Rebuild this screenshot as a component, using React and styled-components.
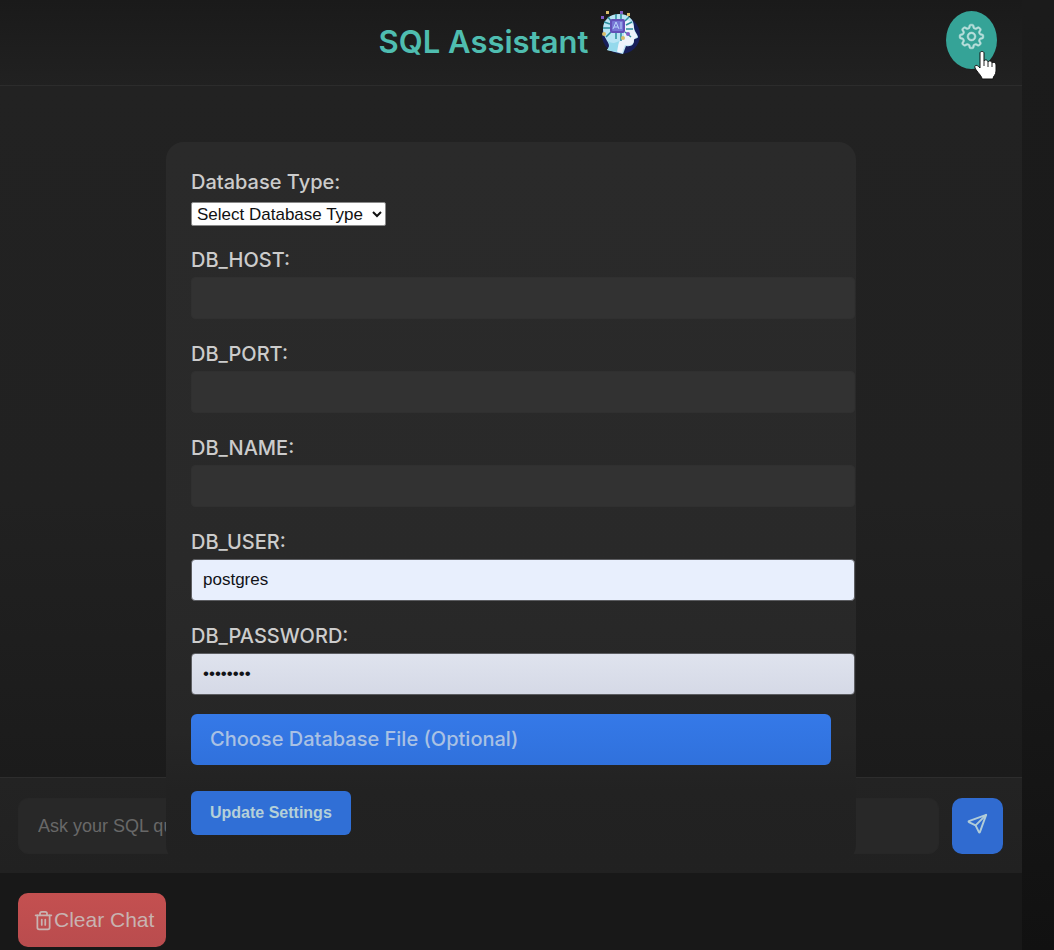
import React from "react";
import styled, { createGlobalStyle } from "styled-components";
import { GoGear } from "react-icons/go";
import { TbSend } from "react-icons/tb";
import { LuTrash2 } from "react-icons/lu";

const GlobalStyle = createGlobalStyle`
  * { box-sizing: border-box; }
  body {
    margin: 0;
    background: linear-gradient(#1b1b1b, #1a1a1a 60%, #111111) #111111;
    font-family: Inter, "Liberation Sans", sans-serif;
    color: #cccccc;
  }
  button, input, select { font-family: "Liberation Sans", Arial, sans-serif; }
`;

const Shell = styled.div`
  position: relative;
  display: flex;
  flex-direction: column;
  min-height: 100vh;
  margin-right: 32px;
  background: #181818;
`;

const Header = styled.header`
  position: relative;
  display: flex;
  align-items: center;
  justify-content: center;
  height: 86px;
  border-bottom: 1px solid #2c2c2c;
  background: linear-gradient(#1a1a1a, #212121);
`;

const Title = styled.h1`
  display: flex;
  align-items: flex-start;
  gap: 13px;
  margin: 0;
  padding-bottom: 10px;
  color: #4fbdb0;
  font-size: 31px;
  font-weight: 600;
  line-height: 48px;

  span { padding-top: 8px; }
  svg { width: 42px; height: 48px; }
`;

const SettingsButton = styled.button`
  position: absolute;
  top: 11px;
  right: 25px;
  display: flex;
  justify-content: center;
  width: 51px;
  height: 58px;
  padding: 12px 0 0;
  border: 0;
  border-radius: 50%;
  background: #35a397;
  color: #b9dfdc;
  font-size: 27px;
  cursor: pointer;

  svg { stroke: currentColor; stroke-width: 0.4; overflow: visible; }
`;

const Pointer = styled.svg`
  position: absolute;
  top: 50px;
  right: 25px;
  z-index: 3;
  width: 24px;
  height: 31px;
  pointer-events: none;
`;

const Chat = styled.main`
  flex: 1;
  min-height: 691px;
  background: linear-gradient(#222222, #212121 60%, #1b1b1b);
`;

const Panel = styled.form`
  position: absolute;
  top: 142px;
  left: 50%;
  z-index: 2;
  width: min(690px, calc(100% - 32px));
  padding: 28px 25px;
  border-radius: 18px;
  background: linear-gradient(#2a2a2a, #292929 60%, #262626 82%, #222222 90%, #212121);
  transform: translateX(-50%);
`;

const Fields = styled.div`
  display: grid;
  gap: 22px;
  margin-bottom: 18px;
`;

const Field = styled.div`
  display: flex;
  flex-direction: column;
  align-items: flex-start;
  gap: ${(p) => (p.$loose ? "8px" : "5px")};

  & + & { min-height: 72px; }
`;

const Label = styled.label`
  color: #cccccc;
  font-size: 20px;
  font-weight: 500;
  line-height: 24px;
`;

const Select = styled.select`
  height: 24px;
  width: 195px;
  padding: 0 1px;
  border: 1px solid #8a8a8a;
  border-radius: 2px;
  background: #ffffff;
  color: #111111;
  font-size: 17px;
`;

const fills = {
  empty: "#323232",
  bright: "#e8effd",
  dim: "linear-gradient(#dfe3ee, #d5d9e6)",
};

const TextInput = styled.input`
  box-sizing: content-box;
  width: 100%;
  height: 40px;
  padding: 0 11px;
  border: 1px solid ${(p) => (p.$fill === "empty" ? "#303030" : "#5c5d61")};
  border-radius: 4px;
  background: ${(p) => fills[p.$fill]};
  color: #111318;
  font-size: 17px;
`;

const FilePicker = styled.label`
  display: block;
  margin-bottom: 26px;
  padding: 0 19px;
  border-radius: 6px;
  background: linear-gradient(#3579e8, #3071dc);
  color: #a9c1e4;
  font-size: 20px;
  font-weight: 500;
  line-height: 51px;
  cursor: pointer;
`;

const HiddenFile = styled.input`
  position: absolute;
  width: 1px;
  height: 1px;
  opacity: 0;
`;

const UpdateButton = styled.button`
  height: 44px;
  padding: 0 19px;
  border: 0;
  border-radius: 6px;
  background: #306fd6;
  color: #b5d0d8;
  font-size: 16px;
  font-weight: 700;
  cursor: pointer;
`;

const Composer = styled.form`
  display: flex;
  gap: 13px;
  padding: 20px 19px 19px 18px;
  border-top: 1px solid #2d2d2d;
  background: linear-gradient(#232323, #212121);
`;

const Prompt = styled.input`
  flex: 1;
  min-width: 0;
  height: 56px;
  padding: 0 19px;
  border: 1px solid #272727;
  border-radius: 10px;
  background: #282828;
  color: #cccccc;
  font-size: 18px;

  &::placeholder { color: #686868; }
`;

const SendButton = styled.button`
  display: flex;
  justify-content: center;
  width: 51px;
  height: 56px;
  padding: 14px 0 0;
  border: 0;
  border-radius: 10px;
  background: #306bd0;
  color: #b0ccd8;
  font-size: 23px;
  cursor: pointer;
`;

const Footer = styled.footer`
  padding: 20px 18px 3px;
  background: #181818;
`;

const ClearButton = styled.button`
  display: flex;
  align-items: center;
  height: 54px;
  padding: 0 12px 0 15px;
  border: 0;
  border-radius: 10px;
  background: linear-gradient(#c45050, #b94c4e);
  color: #c8b3b1;
  font-size: 21px;
  line-height: 24px;
  cursor: pointer;
`;

function BrainLogo() {
  return (
    <svg viewBox="0 0 42 48" aria-hidden="true">
      <circle cx="20" cy="25" r="19" fill="#171f5a" />
      <path d="M2 19C2 10 9 4 18 4C28 4 33 10 33 17C33 21 37 25 37 27C37 29 33 28 33 30C33 34 31 37 25 36L22 44L6 40C10 35 7 33 5 29C3 26 2 23 2 19Z" fill="#b9e5f5" />
      <path d="M23 10C31 10 33 15 33 20C34 23 37 26 36 27L33 29C33 34 31 36 24 35L21 43L14 41C16 35 20 29 23 27Z" fill="#edf4fc" />
      <path d="M7 31C11 34 15 33 18 31L16 42L6 40C10 36 8 34 7 31Z" fill="#94d9ec" />
      <g stroke="#2c8e9d" strokeWidth="1.5" fill="none">
        <path d="M10 11L7 7M15 9V4M20 9V4M24 11L28 7M25 15L31 12M25 19H32M24 22L30 27M20 23V31M15 23V29M10 22L5 27M9 18H2M9 14L3 12" />
      </g>
      <rect x="9" y="9" width="15" height="14" rx="2" fill="#6350b8" />
      <rect x="11" y="11" width="11" height="10" rx="1" fill="#7775d5" />
      <path d="M12 19L15 12L18 19M13 17H17M20 12V19" fill="none" stroke="#b7d4fa" strokeWidth="1" />
      <g fill="#d9bc68">
        <rect x="5" y="1" width="3" height="3" />
        <rect x="26" y="3" width="3" height="3" />
        <circle cx="3" cy="24" r="2" />
        <circle cx="22" cy="28" r="2" />
      </g>
      <g fill="#805cc5">
        <rect x="0" y="6" width="3" height="3" />
        <rect x="19" y="1" width="3" height="3" />
        <circle cx="27" cy="24" r="2" />
      </g>
    </svg>
  );
}

const textFields = [
  { id: "DB_HOST", fill: "empty" },
  { id: "DB_PORT", fill: "empty" },
  { id: "DB_NAME", fill: "empty" },
  { id: "DB_USER", fill: "bright", value: "postgres" },
  { id: "DB_PASSWORD", fill: "dim", value: "postgres", type: "password" },
];

export default function App() {
  const stop = (event) => event.preventDefault();
  return (
    <>
      <GlobalStyle />
      <Shell>
        <Header>
          <Title>
            <span>SQL Assistant</span>
            <BrainLogo />
          </Title>
          <SettingsButton type="button" aria-label="Settings">
            <GoGear />
          </SettingsButton>
        </Header>

        <Chat />

        <Panel onSubmit={stop}>
          <Fields>
            <Field $loose>
              <Label htmlFor="db-type">Database Type:</Label>
              <Select id="db-type">
                <option>Select Database Type</option>
              </Select>
            </Field>
            {textFields.map(({ id, fill, value, type }) => (
              <Field key={id}>
                <Label htmlFor={id}>{id}:</Label>
                <TextInput id={id} type={type || "text"} defaultValue={value} $fill={fill} />
              </Field>
            ))}
          </Fields>
          <FilePicker>
            Choose Database File (Optional)
            <HiddenFile type="file" />
          </FilePicker>
          <UpdateButton type="submit">Update Settings</UpdateButton>
        </Panel>

        <Composer onSubmit={stop}>
          <Prompt aria-label="SQL question" placeholder="Ask your SQL question..." />
          <SendButton type="submit" aria-label="Send">
            <TbSend />
          </SendButton>
        </Composer>

        <Footer>
          <ClearButton type="button">
            <LuTrash2 />
            Clear Chat
          </ClearButton>
        </Footer>

        <Pointer viewBox="0 0 24 31" aria-hidden="true">
          <path
            d="M7 3C7 1 11 1 11 3V11C12 9 15 10 15 12C16 10 19 11 19 13C20 12 23 12 23 15V21C23 25 20 26 20 29H9C9 26 4 22 2 18C1 15 4 14 7 18Z"
            fill="#ffffff"
            stroke="#111111"
            strokeWidth="1"
            strokeLinejoin="round"
          />
          <path d="M11 11V16M15 12V17M19 13V17" stroke="#222222" strokeWidth="1" />
        </Pointer>
      </Shell>
    </>
  );
}
